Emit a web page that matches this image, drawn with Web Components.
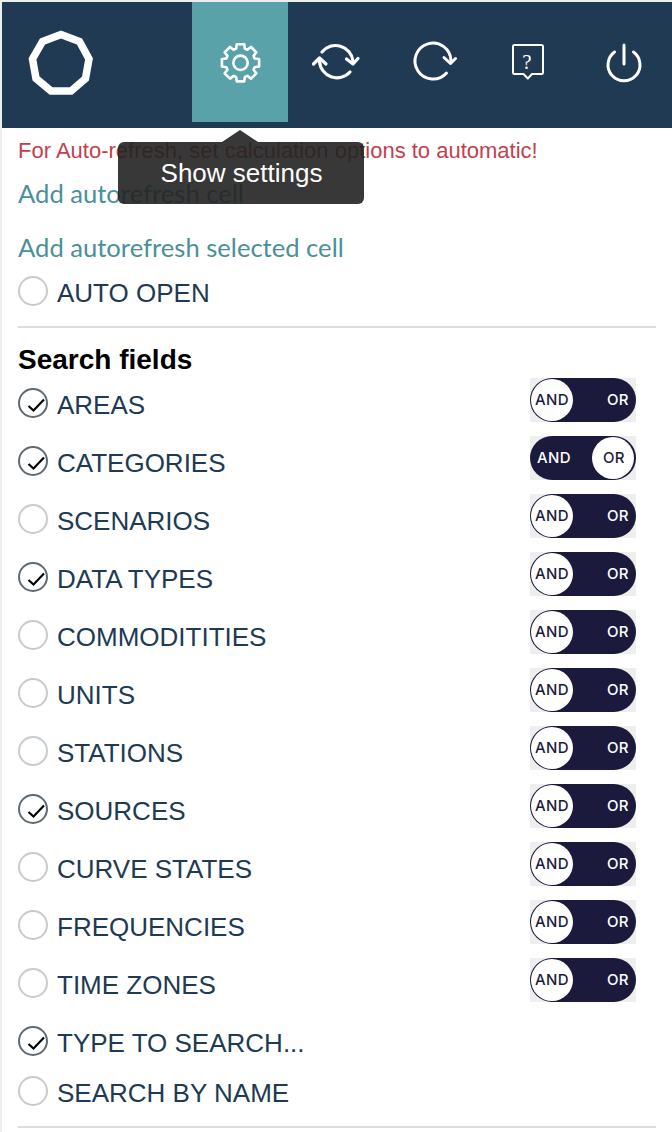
<!DOCTYPE html>
<html>
<head>
<meta charset="utf-8">
<title>Settings</title>
<style>
  html, body { margin: 0; padding: 0; background: #fff; }
</style>
</head>
<body>
<settings-pane>
  <top-bar slot="bar"></top-bar>
  <tool-tip slot="tip">Show settings</tool-tip>

  <p-line kind="warn">For Auto-refresh, set calculation options to automatic!</p-line>
  <p-line kind="link" style="margin-top:13px">Add autorefresh cell</p-line>
  <p-line kind="link" style="margin-top:24px">Add autorefresh selected cell</p-line>
  <check-row short style="margin-top:14px">AUTO OPEN</check-row>
  <h-rule></h-rule>
  <p-line kind="head" style="margin-top:16px">Search fields</p-line>

  <check-row checked>AREAS<and-or slot="end"></and-or></check-row>
  <check-row checked>CATEGORIES<and-or slot="end" value="or"></and-or></check-row>
  <check-row>SCENARIOS<and-or slot="end"></and-or></check-row>
  <check-row checked>DATA TYPES<and-or slot="end"></and-or></check-row>
  <check-row>COMMODITITIES<and-or slot="end"></and-or></check-row>
  <check-row>UNITS<and-or slot="end"></and-or></check-row>
  <check-row>STATIONS<and-or slot="end"></and-or></check-row>
  <check-row checked>SOURCES<and-or slot="end"></and-or></check-row>
  <check-row>CURVE STATES<and-or slot="end"></and-or></check-row>
  <check-row>FREQUENCIES<and-or slot="end"></and-or></check-row>
  <check-row>TIME ZONES<and-or slot="end"></and-or></check-row>
  <check-row short checked style="margin-top:12px">TYPE TO SEARCH...</check-row>
  <check-row short>SEARCH BY NAME</check-row>
  <h-rule></h-rule>
</settings-pane>

<script>
// gear outline, 8 teeth, built once
function gearPath(cx, cy) {
  const pts = [];
  for (let i = 0; i < 8; i++) {
    const a = i * Math.PI / 4 - Math.PI / 2;
    const at = (r, da) => (cx + r * Math.cos(a + da)).toFixed(2) + ' ' + (cy + r * Math.sin(a + da)).toFixed(2);
    pts.push(at(14.8, -0.30), at(19, -0.20), at(19, 0.20), at(14.8, 0.30));
  }
  return 'M' + pts.join('L') + 'Z';
}

class SettingsPane extends HTMLElement {
  constructor() {
    super();
    this.attachShadow({ mode: 'open' });
    this.shadowRoot.innerHTML = `
      <style>
        :host { display: block; position: relative; width: 672px; height: 1132px; overflow: hidden;
          background: #eee; box-sizing: border-box; padding: 2px 0 0 2px; }
        .body { background: #fff; height: 1004px; padding: 9px 16px 0; box-sizing: border-box; }
      </style>
      <slot name="bar"></slot>
      <slot name="tip"></slot>
      <div class="body"><slot></slot></div>`;
  }
}

class TopBar extends HTMLElement {
  constructor() {
    super();
    this.attachShadow({ mode: 'open' });
    this.shadowRoot.innerHTML = `
      <style>
        :host { display: flex; height: 126px; background: #203a54; align-items: flex-start; }
        .logo { width: 190px; height: 126px; flex: none; }
        .tab { width: 96px; height: 120px; flex: none; }
        .tab.on { background: #59a2a9; }
        svg { display: block; fill: none; stroke: #fff; stroke-width: 3; stroke-linecap: round; stroke-linejoin: round; }
        text { font-family: "Liberation Serif", serif; font-size: 21px; fill: #fff; stroke: none; }
      </style>
      <div class="logo">
        <svg width="190" height="126" viewBox="2 2 190 126">
          <polygon points="61,34.500 79.500,41.500 89,59 85.500,78.500 71,91 51,91 36,78.500 32.500,59 42.500,41.500" style="stroke-width:7.500;stroke-linejoin:miter"/>
        </svg>
      </div>
      <div class="tab on">
        <svg width="96" height="120" viewBox="192 2 96 120" style="stroke-width:2.600">
          <path d="${gearPath(240.5, 62.8)}"/>
          <circle cx="240.500" cy="62.800" r="7.200"/>
        </svg>
      </div>
      <div class="tab">
        <svg width="96" height="120" viewBox="288 2 96 120" style="stroke-width:3.200">
          <path d="M322 52A17.500 17.500 0 0 1 353 61"/>
          <path d="M346.500 59L353 64L358 58.500"/>
          <path d="M350 72A17.500 17.500 0 0 1 319.500 61"/>
          <path d="M313.500 64L319.500 58L326 64"/>
        </svg>
      </div>
      <div class="tab">
        <svg width="96" height="120" viewBox="384 2 96 120">
          <path d="M446.500 73A18 18 0 1 1 451 61"/>
          <path d="M444 57.500L450.500 63.500L455.500 58.500"/>
        </svg>
      </div>
      <div class="tab">
        <svg width="96" height="120" viewBox="480 2 96 120" style="stroke-width:2">
          <path d="M514.500 45H541.500A1.500 1.500 0 0 1 543 46.500V72.500A1.500 1.500 0 0 1 541.500 74H532L527.800 78.500L523.500 74H514.500A1.500 1.500 0 0 1 513 72.500V46.500A1.500 1.500 0 0 1 514.500 45Z"/>
          <text x="527" y="68.500" text-anchor="middle">?</text>
        </svg>
      </div>
      <div class="tab">
        <svg width="96" height="120" viewBox="576 2 96 120">
          <path d="M624 45V64"/>
          <path d="M614.500 52A16 16 0 1 0 633.500 52"/>
        </svg>
      </div>`;
  }
}

class ToolTip extends HTMLElement {
  constructor() {
    super();
    this.attachShadow({ mode: 'open' });
    this.shadowRoot.innerHTML = `
      <style>
        :host { position: absolute; left: 118px; top: 142px; width: 246px; height: 62px; z-index: 5;
          display: flex; justify-content: center; padding-top: 14px; box-sizing: border-box;
          background: rgba(34,34,34,.9); border-radius: 6px; color: #fff;
          font: 26px/34px "Liberation Sans", Arial, sans-serif; }
        .arrow { position: absolute; left: 104px; top: -12px; width: 36px; height: 12px;
          background: rgba(34,34,34,.9); clip-path: polygon(50% 0, 100% 100%, 0 100%); }
        span { display: inline-block; margin-left: 1px; }
      </style>
      <div class="arrow"></div>
      <span><slot></slot></span>`;
  }
}

class PLine extends HTMLElement {
  constructor() {
    super();
    this.attachShadow({ mode: 'open' });
    this.shadowRoot.innerHTML = `
      <style>
        :host { display: block; white-space: nowrap; }
        :host([kind=warn]) { font: 22px/28px "Liberation Sans", Arial, sans-serif; color: #c43f4d; }
        :host([kind=link]) { font: 25.600px/30px Lato, "Liberation Sans", sans-serif; color: #4a9098; }
        :host([kind=head]) { font: bold 28px/32px "Liberation Sans", Arial, sans-serif; color: #000; }
      </style>
      <slot></slot>`;
  }
}

class CheckRow extends HTMLElement {
  constructor() {
    super();
    this.attachShadow({ mode: 'open' });
    const on = this.hasAttribute('checked');
    this.shadowRoot.innerHTML = `
      <style>
        :host { display: flex; height: 58px; align-items: flex-start; color: #203a54;
          font: 26px/34px "Liberation Sans", Arial, sans-serif; }
        :host([short]) { height: 50px; }
        svg { flex: none; display: block; margin-top: 12px; fill: none; }
        .label { margin: 12px 0 0 9px; white-space: nowrap; }
        :host([short]) svg { margin-top: 0; }
        :host([short]) .label { margin-top: 0; }
        .end { margin-left: auto; margin-right: 20px; padding-top: 2px; }
      </style>
      <svg width="30" height="30" viewBox="0 0 30 30">
        <circle cx="15" cy="15" r="14" stroke="${on ? '#5f6a72' : '#c6cbd0'}" stroke-width="2"/>
        ${on ? '<path d="M10.500 18L15.500 22.500L26 11.500" stroke="#000" stroke-width="2.200"/>' : ''}
      </svg>
      <div class="label"><slot></slot></div>
      <div class="end"><slot name="end"></slot></div>`;
  }
}

class AndOr extends HTMLElement {
  constructor() {
    super();
    this.attachShadow({ mode: 'open' });
    const or = this.getAttribute('value') === 'or';
    this.shadowRoot.innerHTML = `
      <style>
        :host { display: block; width: 106px; height: 44px; background: #eee; }
        .pill { height: 44px; border-radius: 22px; background: #1b1a3c; position: relative; display: flex;
          align-items: center; justify-content: space-between; padding: 0 7px 0 5px; box-sizing: border-box;
          font: 500 15px/20px Inter, "Liberation Sans", sans-serif; letter-spacing: .4px; color: #fff; }
        .knob { position: absolute; top: 1px; width: 42px; height: 42px; border-radius: 50%; background: #fff; }
        .and, .or { position: relative; }
        .on { color: #1b1a3c; }
      </style>
      <div class="pill">
        <div class="knob" style="${or ? 'right:2px' : 'left:1px'}"></div>
        <span class="and ${or ? '' : 'on'}" style="margin-left:${or ? 2 : 0}px">AND</span>
        <span class="or ${or ? 'on' : ''}" style="margin-right:${or ? 4 : 0}px">OR</span>
      </div>`;
  }
}

class HRule extends HTMLElement {
  constructor() {
    super();
    this.attachShadow({ mode: 'open' });
    this.shadowRoot.innerHTML = `<style>:host { display: block; height: 2px; background: #ddd; }</style>`;
  }
}

customElements.define('settings-pane', SettingsPane);
customElements.define('top-bar', TopBar);
customElements.define('tool-tip', ToolTip);
customElements.define('p-line', PLine);
customElements.define('check-row', CheckRow);
customElements.define('and-or', AndOr);
customElements.define('h-rule', HRule);
</script>
</body>
</html>
